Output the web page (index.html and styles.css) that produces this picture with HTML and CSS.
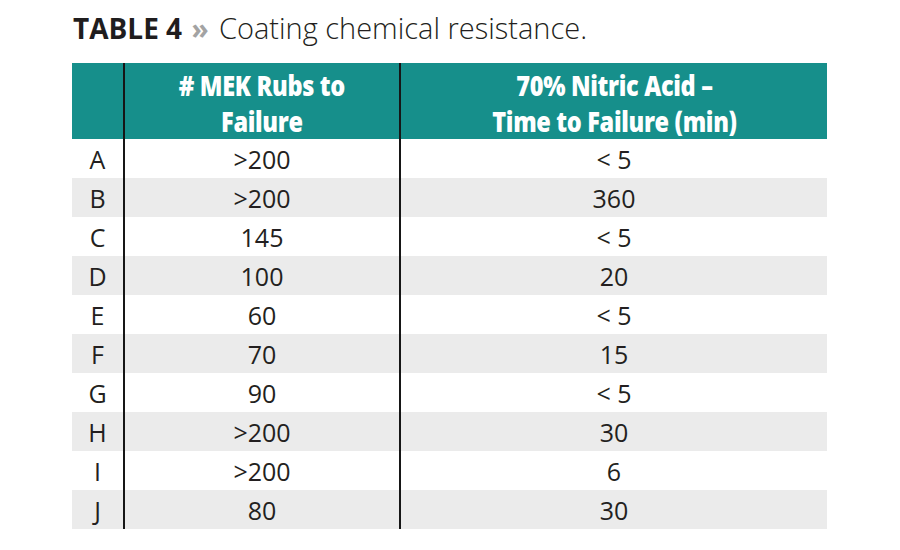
FILE: index.html
```html
<!DOCTYPE html>
<html>
<head>
<meta charset="utf-8">
<link rel="stylesheet" href="styles.css">
</head>
<body>
<div class="page">
  <h1 class="title"><span class="label">TABLE 4</span> <span class="sep">»</span> <span class="caption">Coating chemical resistance.</span></h1>
  <div class="table">
    <div class="row head">
      <div class="cell c1"></div>
      <div class="cell c2"><span class="ht">#&nbsp;MEK Rubs to<br>Failure</span></div>
      <div class="cell c3"><span class="ht">70% Nitric Acid –<br>Time to Failure (min)</span></div>
    </div>
    <div class="row"><div class="cell c1">A</div><div class="cell c2">&gt;200</div><div class="cell c3">&lt; 5</div></div>
    <div class="row alt"><div class="cell c1">B</div><div class="cell c2">&gt;200</div><div class="cell c3">360</div></div>
    <div class="row"><div class="cell c1">C</div><div class="cell c2">145</div><div class="cell c3">&lt; 5</div></div>
    <div class="row alt"><div class="cell c1">D</div><div class="cell c2">100</div><div class="cell c3">20</div></div>
    <div class="row"><div class="cell c1">E</div><div class="cell c2">60</div><div class="cell c3">&lt; 5</div></div>
    <div class="row alt"><div class="cell c1">F</div><div class="cell c2">70</div><div class="cell c3">15</div></div>
    <div class="row"><div class="cell c1">G</div><div class="cell c2">90</div><div class="cell c3">&lt; 5</div></div>
    <div class="row alt"><div class="cell c1">H</div><div class="cell c2">&gt;200</div><div class="cell c3">30</div></div>
    <div class="row"><div class="cell c1">I</div><div class="cell c2">&gt;200</div><div class="cell c3">6</div></div>
    <div class="row alt"><div class="cell c1">J</div><div class="cell c2">80</div><div class="cell c3">30</div></div>
  </div>
</div>
</body>
</html>
```

FILE: styles.css
```css
html, body {
  margin: 0;
  padding: 0;
  background: #ffffff;
}

.page {
  width: 900px;
  height: 550px;
  padding: 14px 0 0 72px;
  box-sizing: border-box;
  font-family: "Open Sans", "Liberation Sans", sans-serif;
  color: #231f20;
}

.title {
  margin: 0 0 21px 1px;
  font-size: 28px;
  line-height: 28px;
  font-weight: 400;
  white-space: nowrap;
}

.label {
  font-weight: 700;
  color: #1f1d1e;
}

.sep {
  font-weight: 700;
  color: #a3a3a3;
  margin: 0 3px 0 2px;
}

.caption {
  font-weight: 300;
  font-size: 29px;
  color: #231f20;
}

.table {
  width: 755px;
  display: flex;
  flex-direction: column;
}

.row {
  display: grid;
  grid-template-columns: 51px 276px 428px;
  height: 39px;
}

.row.alt {
  background: #ebebeb;
}

.row.head {
  height: 76px;
  background: #168f8b;
}

.cell {
  display: flex;
  align-items: center;
  justify-content: center;
  font-size: 25px;
  line-height: 37px;
  padding-top: 2px;
  box-sizing: border-box;
}

.c2, .c3 {
  border-left: 2px solid #161616;
}

.head .cell {
  align-items: flex-start;
  padding-top: 4px;
}

.ht {
  display: inline-block;
  text-align: center;
  color: #ffffff;
  font-family: "Open Sans", "Liberation Sans", sans-serif;
  font-weight: 800;
  font-size: 28px;
  line-height: 36px;
  letter-spacing: -0.4px;
  white-space: nowrap;
  transform: scaleX(0.84);
}
```
